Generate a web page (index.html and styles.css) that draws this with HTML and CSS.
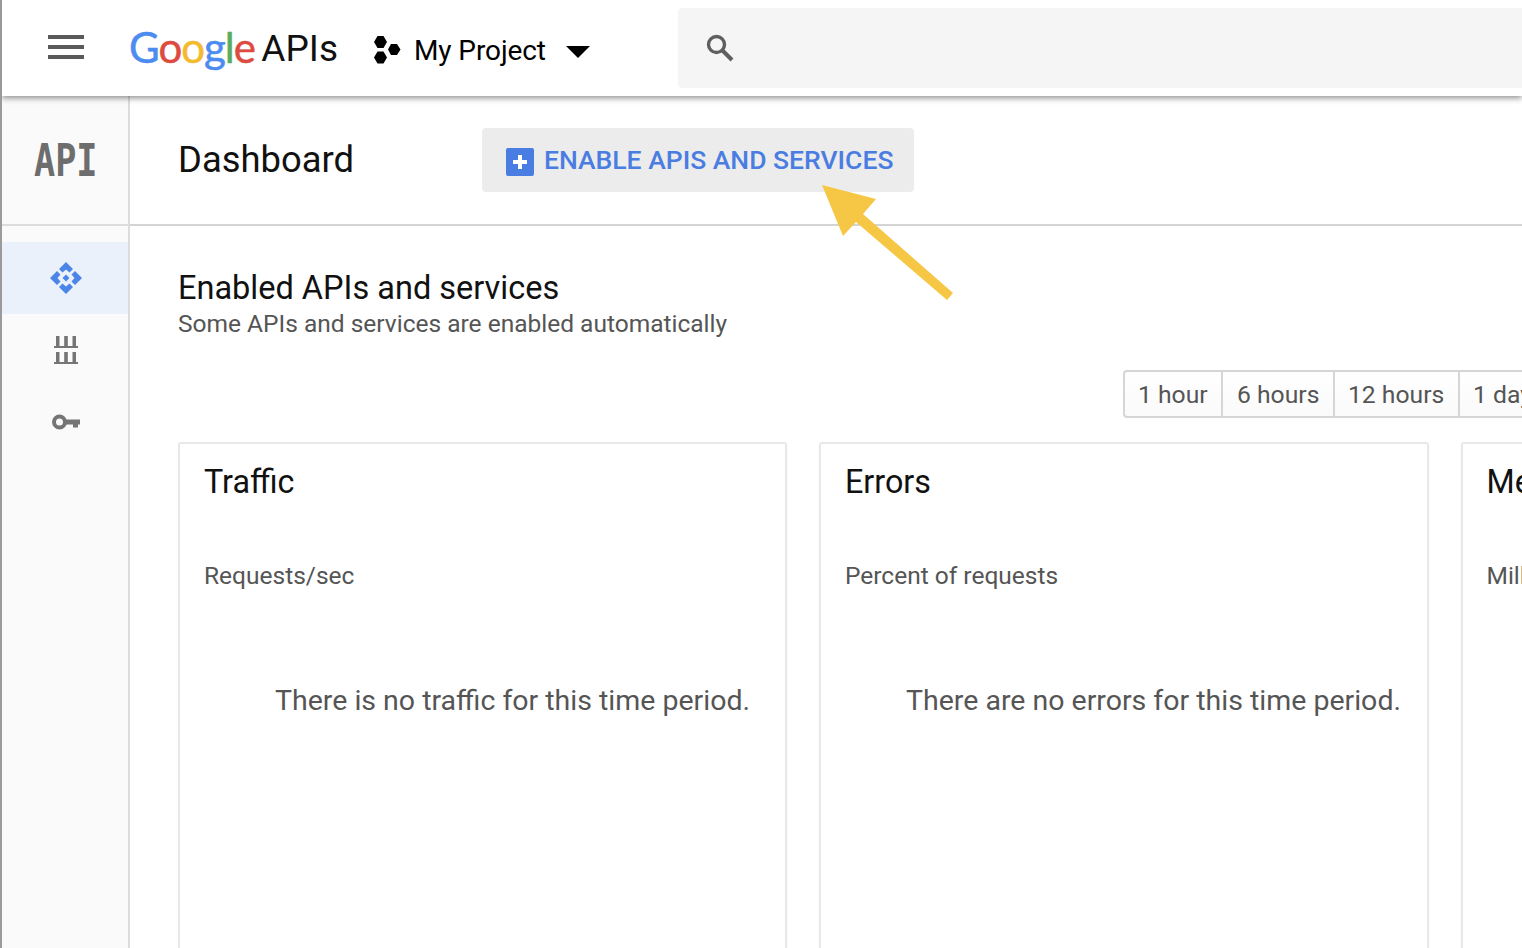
FILE: index.html
```html
<!DOCTYPE html>
<html lang="en">
<head>
<meta charset="utf-8">
<title>Dashboard</title>
<link rel="stylesheet" href="styles.css">
</head>
<body>
<div class="shell">
  <header class="topbar">
    <div class="menu"><span></span><span></span><span></span></div>
    <div class="brand"><span class="logo"><span class="g-blue">G</span><span class="g-red">o</span><span class="g-yellow">o</span><span class="g-blue">g</span><span class="g-green">l</span><span class="g-red">e</span></span><span class="apis">APIs</span></div>
    <div class="project">
      <svg class="hexes" width="28" height="30" viewBox="0 0 28 30"><path d="M1 7L4.500 1H10.500L14 7 10.500 13H4.500Z M15 14.500L18 9H24L27.500 14.500 24 20H18Z M1 22.500L4.500 16.500H10.500L14 22.500 10.500 28.500H4.500Z"/></svg>
      <span class="project-name">My Project</span>
      <svg class="caret" width="24" height="12" viewBox="0 0 24 12"><path d="M0 0H24L12 12Z"/></svg>
    </div>
    <div class="search">
      <svg width="30" height="30" viewBox="0 0 30 30"><circle cx="11.500" cy="11.500" r="8" fill="none" stroke="#5f5f5f" stroke-width="3.400"/><path d="M17.500 17.500L27 27" stroke="#5f5f5f" stroke-width="4" fill="none"/></svg>
    </div>
  </header>
  <div class="body">
    <aside class="sidebar">
      <div class="side-head"><span class="api-mark">API</span></div>
      <nav class="side-nav">
        <div class="side-item active">
          <svg width="32" height="32" viewBox="0 0 32 32" fill="#4c85e8"><path d="M16 0L23 7 19.500 10.500 16 7.500 12.500 10.500 9 7Z M32 16L25 23 21.500 19.500 24.500 16 21.500 12.500 25 9Z M16 32L9 25 12.500 21.500 16 24.500 19.500 21.500 23 25Z M0 16L7 9 10.500 12.500 7.500 16 10.500 19.500 7 23Z M16 12.500L19.500 16 16 19.500 12.500 16Z"/></svg>
        </div>
        <div class="side-item">
          <svg width="24" height="28" viewBox="0 0 24 28" fill="#757575"><path d="M2 0H5.500V10H2Z M10.200 0H13.800V10H10.200Z M18.500 0H22V10H18.500Z M0 10H24V12H0Z M2 16H5.500V26H2Z M10.200 16H13.800V26H10.200Z M18.500 16H22V26H18.500Z M0 26H24V28H0Z"/></svg>
        </div>
        <div class="side-item">
          <svg width="28" height="16" viewBox="0 0 28 16"><circle cx="7.500" cy="8" r="5.500" fill="none" stroke="#757575" stroke-width="4"/><path d="M13 5.500H28V10.500H26V13.500H21V10.500H13Z" fill="#757575"/></svg>
        </div>
      </nav>
    </aside>
    <main class="main">
      <div class="page-head">
        <h1 class="page-title">Dashboard</h1>
        <button class="enable-btn">
          <svg width="28" height="28" viewBox="0 0 28 28"><rect width="28" height="28" rx="2" fill="#4a7de2"/><path d="M12 7H16V12H21V16H16V21H12V16H7V12H12Z" fill="#fff"/></svg>
          <span>ENABLE APIS AND SERVICES</span>
        </button>
        <svg class="arrow" width="136" height="120" viewBox="0 0 136 120"><path d="M2 2L56 16 43 31 133 110 127 117 36 39 23 53Z" fill="#f6c744"/></svg>
      </div>
      <section class="content">
        <h2 class="section-title">Enabled APIs and services</h2>
        <p class="section-sub">Some APIs and services are enabled automatically</p>
        <div class="range-row">
          <div class="range">
            <span class="range-item r1">1 hour</span>
            <span class="range-item r2">6 hours</span>
            <span class="range-item r3">12 hours</span>
            <span class="range-item r4">1 day</span>
          </div>
        </div>
        <div class="cards">
          <article class="card">
            <h3 class="card-title">Traffic</h3>
            <div class="card-unit">Requests/sec</div>
            <div class="card-empty e1">There is no traffic for this time period.</div>
          </article>
          <article class="card">
            <h3 class="card-title">Errors</h3>
            <div class="card-unit">Percent of requests</div>
            <div class="card-empty e2">There are no errors for this time period.</div>
          </article>
          <article class="card">
            <h3 class="card-title">Median latency</h3>
            <div class="card-unit">Milliseconds</div>
          </article>
        </div>
      </section>
    </main>
  </div>
</div>
</body>
</html>
```
FILE: styles.css
```css
* { box-sizing: border-box; }
html, body { margin: 0; height: 100%; overflow: hidden; background: #fff; }
body { font-family: Roboto, "Liberation Sans", sans-serif; color: #000; }
.shell { width: 1522px; height: 948px; display: flex; flex-direction: column; border-left: 2px solid #9a9a9a; overflow: hidden; }

.topbar { height: 96px; flex: none; display: flex; align-items: center; background: #fff; box-shadow: 0 2px 6px rgba(0,0,0,.45); position: relative; z-index: 2; }
.menu { width: 36px; margin-left: 46px; display: flex; flex-direction: column; gap: 6px; margin-top: -3px; }
.menu span { display: block; height: 4px; background: #5a5a5a; }
.brand { margin-left: 45px; display: flex; align-items: baseline; width: 209px; margin-top: -6px; }
.logo { font-family: Lato, sans-serif; font-size: 42px; letter-spacing: -1px; width: 136px; -webkit-text-stroke: .5px; transform: translateY(2px); }
.g-blue { color: #4c8bf0; } .g-red { color: #dd4b3e; } .g-yellow { color: #f5b92e; } .g-green { color: #57ad5b; }
.apis { font-size: 37px; color: #111; letter-spacing: 0; }
.project { display: flex; align-items: center; margin-left: 35px; width: 304px; margin-top: 4px; }
.hexes { fill: #000; }
.project-name { font-size: 28px; margin-left: 13px; color: #000; letter-spacing: -.1px; }
.caret { margin-left: 20px; fill: #000; margin-top: 3px; }
.search { flex: 1; height: 80px; background: #f5f5f5; border-radius: 4px 0 0 4px; display: flex; align-items: center; padding-left: 27px; margin-left: 1px; }
.search svg { margin-top: -1px; }

.body { flex: 1; display: flex; min-height: 0; }
.sidebar { width: 128px; flex: none; background: #fafafa; border-right: 2px solid #dcdcdc; }
.side-head { height: 130px; border-bottom: 2px solid #dcdcdc; display: flex; align-items: center; justify-content: center; }
.api-mark { font-family: "DejaVu Sans Mono", monospace; font-weight: 700; font-size: 44px; color: #6d6d6d; transform: scaleX(.8); margin-left: 2px; }
.side-nav { padding-top: 16px; }
.side-item { height: 72px; display: flex; align-items: center; justify-content: center; padding-left: 2px; }
.side-item.active { background: #ebf1fa; }

.main { flex: 1; min-width: 0; position: relative; }
.page-head { height: 130px; border-bottom: 2px solid #d4d4d4; display: flex; align-items: center; padding-left: 48px; position: relative; }
.page-title { margin: -1px 0 0; font-weight: 400; font-size: 36.400px; width: 304px; color: #111; }
.enable-btn { height: 64px; width: 432px; border: 0; border-radius: 4px; background: #ececec; display: flex; align-items: center; padding: 0 0 0 24px; gap: 10px; font-family: inherit; }
.enable-btn svg { margin-top: 4px; }
.enable-btn span { font-size: 26.500px; font-weight: 500; color: #4a7de2; white-space: nowrap; letter-spacing: 0; margin-top: -2px; }
.arrow { position: absolute; left: 690px; top: 87px; z-index: 1; }

.content { padding: 44px 0 0 48px; }
.section-title { margin: 0; font-weight: 400; font-size: 32.500px; line-height: 36px; color: #111; }
.section-sub { margin: 2px 0 0; font-size: 24.500px; line-height: 32px; color: #555; }
.range-row { margin-top: 30px; padding-left: 945px; }
.range { display: flex; width: 500px; height: 48px; border: 2px solid #d6d6d6; border-right: 0; border-radius: 4px 0 0 4px; background: linear-gradient(#fff, #fafafa); }
.range-item { display: flex; align-items: center; padding: 1px 0 0 13px; font-size: 24.700px; color: #555; border-right: 2px solid #d6d6d6; white-space: nowrap; }
.r1 { width: 98px; } .r2 { width: 112px; padding-left: 14px; } .r3 { width: 125px; } .r4 { width: 120px; border-right: 0; }
.cards { margin-top: 24px; display: grid; grid-template-columns: 609px 609.500px 610px; gap: 32px; }
.card { height: 620px; border: 2px solid #e8e8e8; border-radius: 3px; padding: 0 0 0 24px; background: #fff; box-shadow: 0 1px 2px rgba(0,0,0,.06); }
.card-title { margin: 17px 0 0; font-weight: 400; font-size: 32.300px; line-height: 42px; color: #111; }
.card-unit { margin-top: 57px; font-size: 24.500px; line-height: 32px; color: #555; }
.card-empty { margin-top: 91px; font-size: 28.500px; line-height: 36px; color: #555; white-space: nowrap; }
.e1 { padding-left: 71px; } .e2 { padding-left: 61px; }
```
